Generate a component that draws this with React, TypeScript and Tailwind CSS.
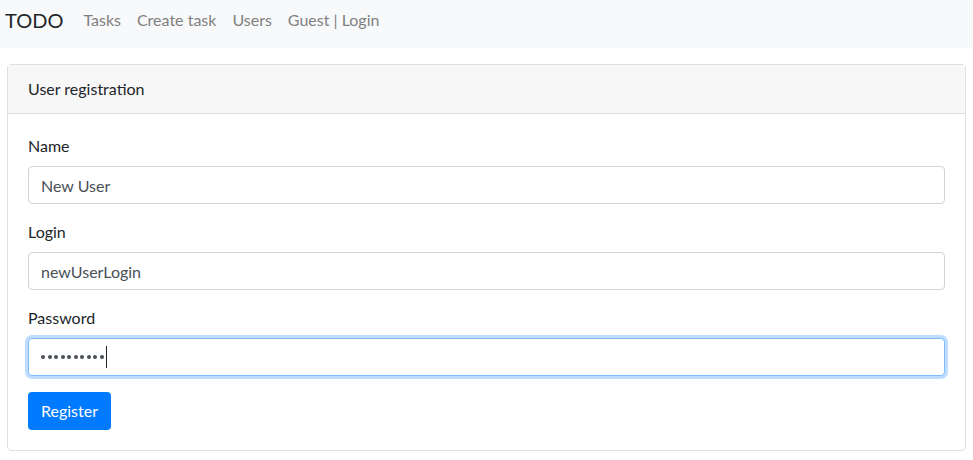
import React from 'react';

const font = { fontFamily: 'Lato, "Open Sans", sans-serif' };

const Field: React.FC<{ label: string; value: string }> = ({ label, value }) => (
  <div className="mb-4">
    <label className="mb-2 block text-base leading-6 text-[#212529]">{label}</label>
    <input
      type="text"
      defaultValue={value}
      className="block h-[38px] w-full rounded border border-[#ced4da] bg-white px-3 text-base text-[#495057] outline-none"
    />
  </div>
);

const App: React.FC = () => {
  return (
    <div className="min-h-[460px] bg-white" style={font}>
      {/* Navbar */}
      <nav className="flex h-12 items-start bg-[#f8f9fa] pl-[5px] pt-[5px]">
        <span className="mr-3 text-xl leading-[30px] text-[#212529]">TODO</span>
        <div className="flex items-center text-base leading-[30px] text-[#808080]">
          <a className="px-2">Tasks</a>
          <a className="px-2">Create task</a>
          <a className="px-2">Users</a>
          <a className="px-2">Guest | Login</a>
        </div>
      </nav>

      {/* Card */}
      <div className="mx-[7px] mt-4 rounded border border-[#dfdfdf] bg-white">
        <div className="border-b border-[#dfdfdf] bg-[#f7f7f7] px-5 py-3 text-base leading-6 text-[#212529]">
          User registration
        </div>
        <div className="p-5">
          <Field label="Name" value="New User" />
          <Field label="Login" value="newUserLogin" />
          <div className="mb-4">
            <label className="mb-2 block text-base leading-6 text-[#212529]">Password</label>
            <div className="flex h-[38px] w-full items-center rounded border border-[#80bdff] bg-white px-3 shadow-[0_0_0_3px_rgba(0,123,255,0.25)]">
              <div className="flex items-center gap-[2.5px]">
                {Array.from({ length: 10 }).map((_, i) => (
                  <span key={i} className="h-1 w-1 rounded-full bg-[#495057]" />
                ))}
              </div>
              <span className="ml-[2px] h-[22px] w-px bg-[#212529]" />
            </div>
          </div>
          <button className="h-[38px] rounded bg-[#007bff] px-[13px] text-base text-white">Register</button>
        </div>
      </div>
    </div>
  );
};

export default App;
